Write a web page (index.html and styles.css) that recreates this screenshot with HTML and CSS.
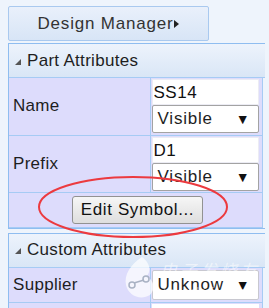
FILE: index.html
```html
<!DOCTYPE html>
<html lang="en">
  <head>
    <meta charset="UTF-8" />
    <title>Part Attributes</title>
    <link rel="stylesheet" href="styles.css">
  </head>
  <body>
    <div class="sidebar">
      <button class="dm-btn">Design Manager<span class="arrow-right"></span></button>

      <div class="panel">
        <div class="panel-head"><span class="twisty"></span>Part Attributes</div>
        <table class="attrs">
          <tr class="row-tall">
            <td class="label">Name</td>
            <td class="value">
              <input class="field" type="text" value="SS14" />
              <div class="select"><span>Visible</span><span class="caret">▼</span></div>
            </td>
          </tr>
          <tr class="row-tall">
            <td class="label">Prefix</td>
            <td class="value">
              <input class="field" type="text" value="D1" />
              <div class="select"><span>Visible</span><span class="caret">▼</span></div>
            </td>
          </tr>
          <tr class="row-btn">
            <td class="label center" colspan="2">
              <button class="btn-edit">Edit Symbol...</button>
            </td>
          </tr>
        </table>
      </div>

      <div class="panel panel-custom">
        <div class="panel-head"><span class="twisty"></span>Custom Attributes</div>
        <table class="attrs">
          <tr class="row-short">
            <td class="label">Supplier</td>
            <td class="value">
              <div class="select select-short"><span>Unknow</span><span class="caret">▼</span></div>
            </td>
          </tr>
          <tr class="row-short">
            <td class="label"></td>
            <td class="value"><div class="field-stub"></div></td>
          </tr>
        </table>
      </div>
    </div>

    <!-- annotation drawn over the screenshot -->
    <svg class="mark" width="269" height="308" viewBox="0 0 269 308">
      <ellipse cx="133" cy="207" rx="94" ry="30" fill="none" stroke="#ec3a3f" stroke-width="2" />
    </svg>

    <div class="watermark">
      <svg class="wm-logo" width="34" height="46" viewBox="0 0 34 46">
        <path d="M20 2 C8 10 2 20 4 30 C6 40 18 46 28 40 C34 34 32 24 24 22 C30 16 28 8 20 2 Z" fill="rgba(255,255,255,0.7)" />
        <circle cx="10" cy="30" r="3" fill="none" stroke="#a9b2c4" stroke-width="1.5" />
        <circle cx="24" cy="24" r="3" fill="none" stroke="#a9b2c4" stroke-width="1.5" />
        <line x1="12" y1="28" x2="22" y2="25" stroke="#a9b2c4" stroke-width="1.5" />
      </svg>
      <div class="wm-text">电子发烧友</div>
      <div class="wm-url">www.elecfans.com</div>
    </div>
  </body>
</html>
```

FILE: styles.css
```css
:root {
  --page-bg: #eef4fc;
  --panel-border: #8fbdf0;
  --cell-border: #a6cbf4;
  --label-bg: #dddcfc;
  --text-color: #1e1e1e;
}

* {
  margin: 0;
  padding: 0;
  box-sizing: border-box;
}

body {
  font-family: "Liberation Sans", Arial, sans-serif;
  font-size: 17px;
  letter-spacing: 0.3px;
  color: var(--text-color);
  background-color: var(--page-bg);
  width: 269px;
  height: 308px;
  overflow: hidden;
  position: relative;
}

.sidebar {
  padding: 6px 0 0 8px;
}

.dm-btn {
  display: flex;
  align-items: center;
  justify-content: center;
  width: 201px;
  height: 35px;
  font-family: inherit;
  font-size: 17px;
  letter-spacing: 0.8px;
  color: #333;
  border: 1px solid #a9c9ef;
  border-radius: 2px;
  background: linear-gradient(#e9f0fb, #d8e5f6);
}

.arrow-right {
  display: inline-block;
  margin-left: 1px;
  margin-top: 1px;
  border-left: 5px solid #222;
  border-top: 4px solid transparent;
  border-bottom: 4px solid transparent;
}

.panel {
  width: 257px;
  margin-top: 2px;
  border: 1px solid var(--panel-border);
  border-right: none;
}

.panel-custom {
  margin-top: 4px;
}

.panel-head {
  display: flex;
  align-items: center;
  height: 34px;
  padding-left: 6px;
  background: linear-gradient(#edf3fc, #d9e6f6);
  border-bottom: 1px solid var(--cell-border);
}

.twisty {
  display: inline-block;
  width: 0;
  height: 0;
  margin-right: 6px;
  margin-top: 2px;
  border-left: 6px solid transparent;
  border-bottom: 6px solid #555;
}

.attrs {
  width: 254px;
  border-collapse: collapse;
}

.attrs td {
  border: 1px solid var(--cell-border);
  border-top: none;
}

.attrs td:first-child {
  border-left: none;
}

.label {
  width: 141px;
  background-color: var(--label-bg);
  padding-left: 4px;
  vertical-align: middle;
}

.label.center {
  text-align: center;
}

.value {
  background-color: var(--label-bg);
  padding: 1px;
  vertical-align: top;
}

.row-tall {
  height: 57px;
}

.row-btn {
  height: 35px;
}

.row-short {
  height: 35px;
}

.field {
  display: block;
  width: 107px;
  height: 26px;
  padding: 2px 1px 0;
  font-family: inherit;
  font-size: 17px;
  letter-spacing: 0.5px;
  color: #111;
  background: #fff;
  border: 1px solid #ececf4;
  outline: none;
}

.select {
  display: flex;
  align-items: center;
  justify-content: space-between;
  width: 107px;
  height: 28px;
  padding: 0 8px 0 5px;
  letter-spacing: 0.8px;
  background: #fff;
  border: 1px solid #a3a3a3;
  border-radius: 2px;
}

.select-short {
  height: 30px;
  margin-top: 1px;
  border-color: #c8c8d0;
}

.caret {
  font-size: 14px;
  letter-spacing: 0;
  color: #111;
}

.field-stub {
  width: 107px;
  height: 10px;
  background: #fff;
}

.btn-edit {
  width: 131px;
  height: 28px;
  margin-top: 1px;
  font-family: inherit;
  font-size: 17px;
  letter-spacing: 0.6px;
  color: #111;
  border: 1px solid #929292;
  border-radius: 3px;
  background: linear-gradient(#f6f6f6, #dedede);
}

.mark {
  position: absolute;
  left: 0;
  top: 0;
  pointer-events: none;
}

.watermark {
  position: absolute;
  left: 122px;
  top: 255px;
  width: 140px;
  height: 50px;
  pointer-events: none;
}

.wm-logo {
  position: absolute;
  left: 0;
  top: 0;
}

.wm-text {
  position: absolute;
  left: 38px;
  top: 2px;
  font-family: "Noto Sans CJK SC", sans-serif;
  font-size: 17px;
  font-style: italic;
  color: rgba(255, 255, 255, 0.55);
  letter-spacing: 3px;
}

.wm-url {
  position: absolute;
  left: 42px;
  top: 30px;
  font-size: 11px;
  letter-spacing: 0;
  color: rgba(255, 255, 255, 0.5);
}
```
